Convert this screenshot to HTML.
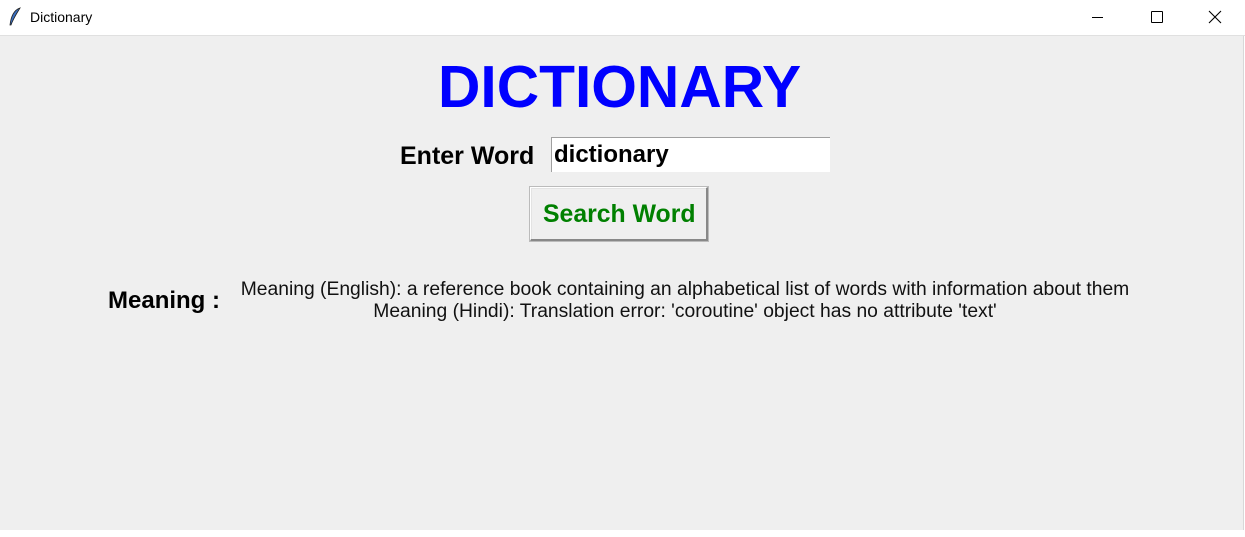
<!DOCTYPE html>
<html><head><style>
body{margin:0;width:1245px;height:537px;background:#fff;position:relative;overflow:hidden;font-family:"Liberation Sans",Arial,sans-serif}
.tb{position:absolute;left:0;top:0;width:1245px;height:35px;background:#fff;border-bottom:1px solid #e0e0e0}
.content{position:absolute;left:0;top:36px;width:1243px;height:494px;background:#efefef;border-right:1px solid #d8d8d8}
.a{position:absolute;white-space:nowrap}
</style></head><body>
<div class="tb">
<svg class="a" style="left:8px;top:7px" width="14" height="20" viewBox="0 0 14 20"><path d="M12 1 C6 3 3 9 2 18 L3 18 C5 12 9 6 12 1Z" fill="#3a6fc0" stroke="#222" stroke-width="0.8"/></svg>
<div class="a" style="left:30px;top:9px;font-size:14px;color:#000;font-family:'Liberation Sans',sans-serif">Dictionary</div>
<div class="a" style="left:1092px;top:17px;width:11px;height:1px;background:#000"></div>
<div class="a" style="left:1151px;top:11px;width:10px;height:10px;border:1px solid #000;border-radius:1px"></div>
<svg class="a" style="left:1208px;top:10px" width="14" height="14"><path d="M1 1L13 13M13 1L1 13" stroke="#000" stroke-width="1.1"/></svg>
</div>
<div class="content"></div>
<div class="a" style="left:438px;top:53px;font-size:59px;font-weight:bold;color:#0000ff;transform:scaleX(0.995);transform-origin:left">DICTIONARY</div>
<div class="a" style="left:400px;top:142px;font-size:25px;font-weight:bold;color:#000">Enter Word</div>
<div class="a" style="left:551px;top:137px;width:278px;height:34px;background:#fff;border-top:1px solid #a0a0a0;border-left:1px solid #a0a0a0"></div>
<div class="a" style="left:554px;top:141px;font-size:24px;font-weight:bold;color:#000">dictionary</div>
<div class="a" style="left:530px;top:187px;width:175px;height:51px;background:#efefef;border:1px solid #fff;border-right:2px solid #888;border-bottom:2px solid #888;box-shadow:inset 1px 1px 0 #e3e3e3, 0 0 0 1px #bbb"></div>
<div class="a" style="left:543px;top:201px;font-size:24.8px;font-weight:bold;color:#008000">Search Word</div>
<div class="a" style="left:108px;top:287px;font-size:24px;font-weight:bold;color:#000">Meaning :</div>
<div class="a" style="left:235px;top:279px;width:900px;text-align:center;font-size:19.3px;line-height:22px;color:#111">Meaning (English): a reference book containing an alphabetical list of words with information about them<br>Meaning (Hindi): Translation error: 'coroutine' object has no attribute 'text'</div>
</body></html>
